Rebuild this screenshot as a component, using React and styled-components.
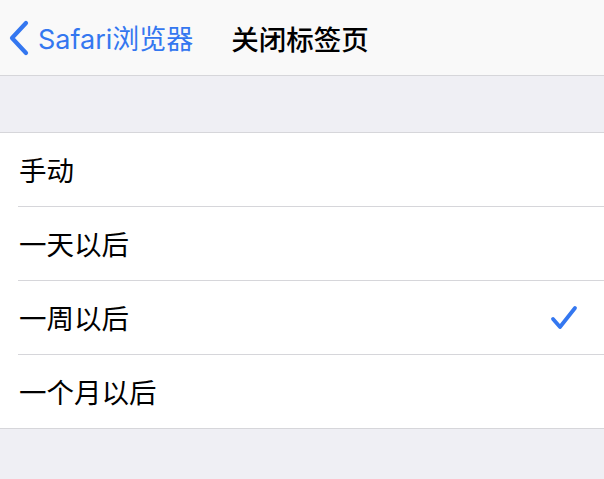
import React from "react";
import styled, { createGlobalStyle } from "styled-components";

const Global = createGlobalStyle`
  html, body { margin: 0; padding: 0; background: #efeff4; }
  body { font-family: "Inter", "Noto Sans CJK SC", sans-serif; -webkit-font-smoothing: antialiased; }
`;

const Page = styled.div`
  width: 604px;
  height: 479px;
  background: #efeff4;
  overflow: hidden;
  display: flex;
  flex-direction: column;
`;

const NavBar = styled.div`
  height: 75px;
  background: #f9f9f9;
  border-bottom: 1px solid #d6d6da;
  display: flex;
  align-items: center;
  flex-shrink: 0;
`;

const Back = styled.div`
  display: flex;
  align-items: center;
  padding-left: 8px;
  gap: 8px;
  color: #3477f0;
  font-size: 27px;
  font-family: "Inter", "Noto Sans CJK SC", sans-serif;
`;

const Title = styled.div`
  margin-left: 38px;
  font-size: 27.5px;
  font-weight: 500;
  color: #000;
  font-family: "Noto Sans CJK SC", sans-serif;
`;

const Spacer = styled.div`
  height: 56px;
  flex-shrink: 0;
`;

const List = styled.div`
  background: #fff;
  border-top: 1px solid #d6d6da;
  border-bottom: 1px solid #d6d6da;
`;

const Row = styled.div`
  height: 73px;
  display: flex;
  align-items: center;
  justify-content: space-between;
  padding-left: 19px;
  padding-right: 26px;
  position: relative;
  font-size: 27.5px;
  color: #000;
  font-family: "Noto Sans CJK SC", sans-serif;
  & + & {
    border-top: 1px solid transparent;
  }
  & + &::before {
    content: "";
    position: absolute;
    left: 18px;
    right: 0;
    top: -1px;
    height: 1px;
    background: #d6d6da;
  }
`;

const Label = styled.span`
  display: block;
  line-height: 1;
`;

const Chevron = () => (
  <svg width="22" height="36" viewBox="0 0 22 36">
    <path d="M18 3 L4 18 L18 33" fill="none" stroke="#3477f0" strokeWidth="4.2" strokeLinecap="round" strokeLinejoin="round" />
  </svg>
);

const Check = () => (
  <svg width="28" height="26" viewBox="0 0 28 26">
    <path d="M3 14 L10 22 L25 3" fill="none" stroke="#3477f0" strokeWidth="3.8" strokeLinecap="round" strokeLinejoin="round" />
  </svg>
);

const items = [
  { label: "手动" },
  { label: "一天以后" },
  { label: "一周以后", checked: true },
  { label: "一个月以后" },
];

export default function App() {
  return (
    <Page>
      <Global />
      <NavBar>
        <Back>
          <Chevron />
          <span>Safari浏览器</span>
        </Back>
        <Title>关闭标签页</Title>
      </NavBar>
      <Spacer />
      <List>
        {items.map((it) => (
          <Row key={it.label}>
            <Label>{it.label}</Label>
            {it.checked && <Check />}
          </Row>
        ))}
      </List>
    </Page>
  );
}
